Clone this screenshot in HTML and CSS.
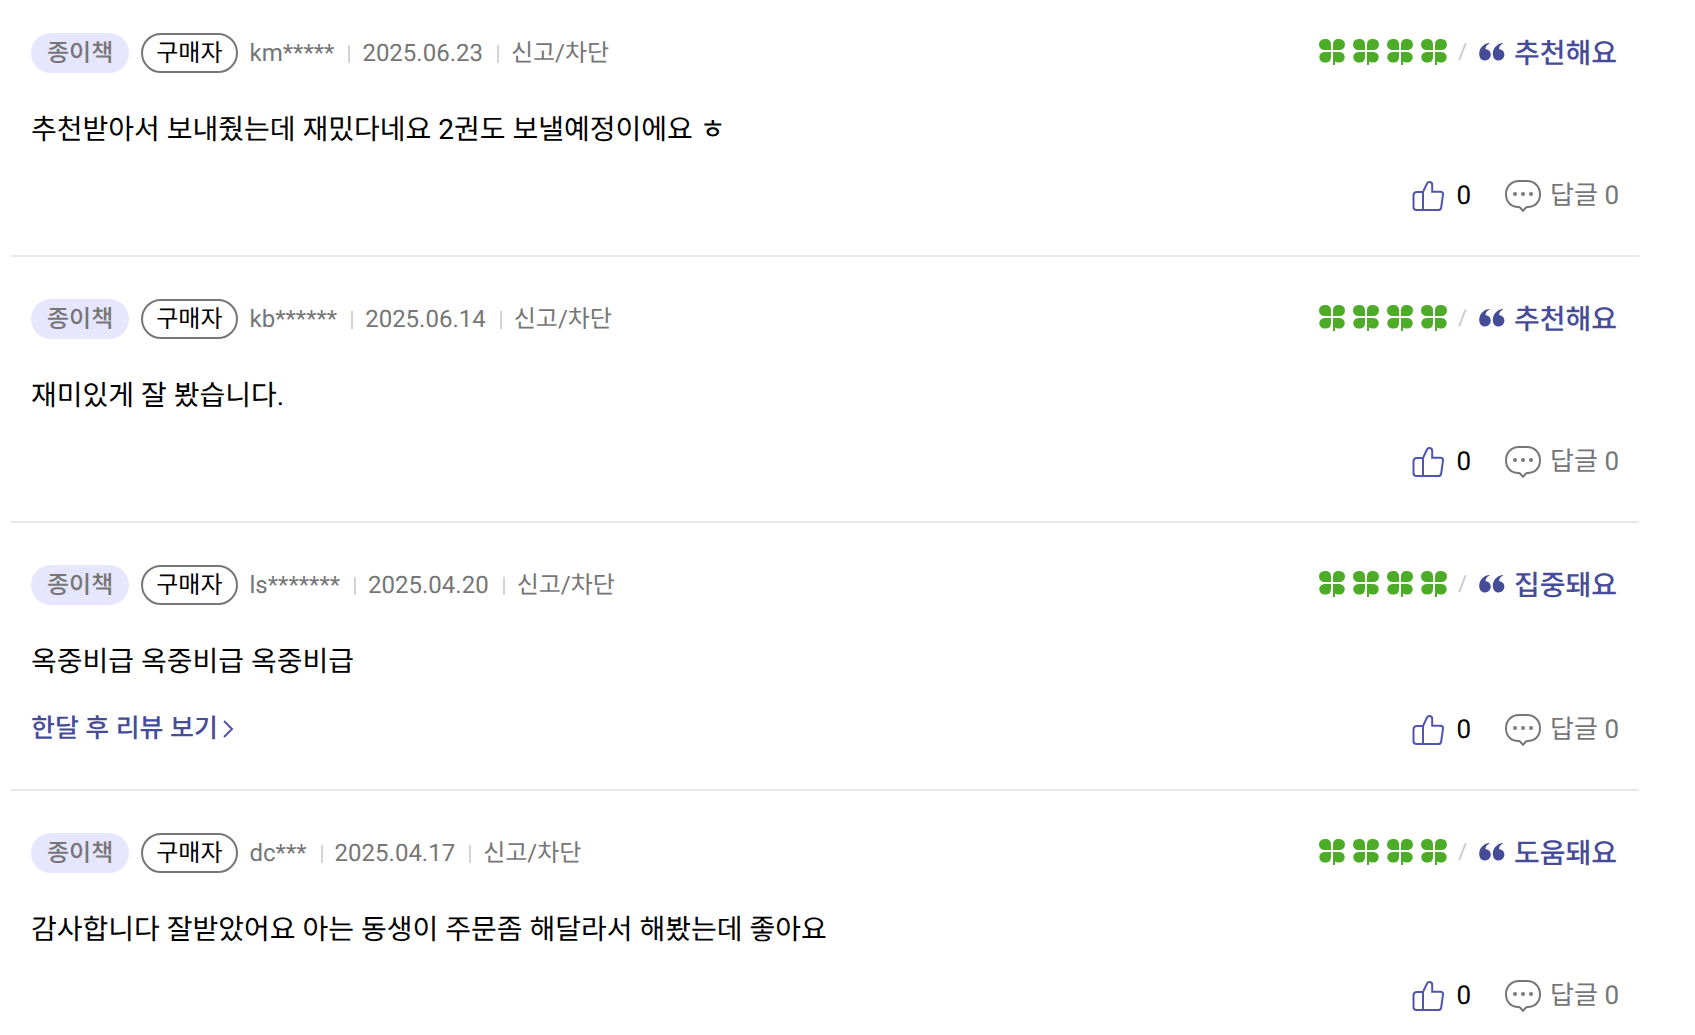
FILE: index.html
```
<!DOCTYPE html>
<html lang="ko">
<head>
<meta charset="utf-8">
<meta name="viewport" content="width=device-width, initial-scale=1">
<title>리뷰</title>
<link rel="stylesheet" href="styles.css">
</head>
<body>
<svg class="sprite" aria-hidden="true">
  <symbol id="clover" viewBox="0 0 26 26">
    <path d="M12 11H5.500A5.500 5.500 0 0 1 5.500 0H6.500Q12 0 12 5.500zM14 11V5.500Q14 0 19.500 0H20.500A5.500 5.500 0 0 1 20.500 11zM12 13V18Q12 23.500 6.500 23.500H5.500A5.250 5.250 0 0 1 5.500 13zM14 13H20.500A5.250 5.250 0 0 1 20.500 23.500H19.500Q17.500 23.500 16 22.500V26H14z"/>
  </symbol>
  <symbol id="quote" viewBox="0 0 26 18">
    <path id="mark" d="M10.500 0.500C7.500 2 6.500 4 6.500 6.200C9.500 6.200 11.800 8.500 11.800 11.600C11.800 15 9.300 17.500 6 17.500C2.500 17.500 0.200 14.800 0.200 11C0.200 5.500 4 0.800 9.800 0Q10.800 0 10.500 0.500z"/>
    <use href="#mark" x="13.600"/>
  </symbol>
  <symbol id="thumb" viewBox="0 0 32 32">
    <path d="M11 12 15 3.500C15.500 2.300 16.300 2 17.300 2C19 2 20.200 3.200 20.200 4.800V11.800H28.500Q31.200 11.800 31 14.500L29.200 27.500Q28.800 30 26.500 30H4.500Q1.500 30 1.500 27V15.500Q1.500 12 5 12H11V30"/>
  </symbol>
  <symbol id="bubble" viewBox="0 -1 36 34">
    <path d="M14 1H22C29.500 1 35 6.500 35 14.200C35 22 30 27 22.500 27Q21.300 27 20.500 28L18 30.800 15.500 28Q14.700 27 13.500 27C6 27 1 22 1 14.200C1 6.500 6.500 1 14 1z"/>
    <g class="dots"><circle cx="10" cy="14" r="2"/><circle cx="18" cy="14" r="2"/><circle cx="26" cy="14" r="2"/></g>
  </symbol>
</svg>
<main class="reviews">
  <article class="review">
    <header class="review-head">
      <div class="meta">
        <span class="badge badge-type">종이책</span><span class="badge badge-buyer">구매자</span>
        <span class="info"><span>km*****</span><time datetime="2025-06-23">2025.06.23</time><button type="button">신고/차단</button></span>
      </div>
      <div class="rating">
        <span class="clovers" role="img" aria-label="4점 만점에 4점"><svg><use href="#clover"/></svg><svg><use href="#clover"/></svg><svg><use href="#clover"/></svg><svg><use href="#clover"/></svg></span>
        <span class="slash">/</span><svg class="quote"><use href="#quote"/></svg><span class="tag">추천해요</span>
      </div>
    </header>
    <p class="text">추천받아서 보내줬는데 재밌다네요 2권도 보낼예정이에요 ㅎ</p>
    <footer class="review-foot">
      <div class="actions">
        <button type="button" class="like" aria-label="좋아요 0"><svg><use href="#thumb"/></svg><span>0</span></button>
        <button type="button" class="reply"><svg><use href="#bubble"/></svg><span>답글 0</span></button>
      </div>
    </footer>
  </article>
  <article class="review">
    <header class="review-head">
      <div class="meta">
        <span class="badge badge-type">종이책</span><span class="badge badge-buyer">구매자</span>
        <span class="info"><span>kb******</span><time datetime="2025-06-14">2025.06.14</time><button type="button">신고/차단</button></span>
      </div>
      <div class="rating">
        <span class="clovers" role="img" aria-label="4점 만점에 4점"><svg><use href="#clover"/></svg><svg><use href="#clover"/></svg><svg><use href="#clover"/></svg><svg><use href="#clover"/></svg></span>
        <span class="slash">/</span><svg class="quote"><use href="#quote"/></svg><span class="tag">추천해요</span>
      </div>
    </header>
    <p class="text">재미있게 잘 봤습니다.</p>
    <footer class="review-foot">
      <div class="actions">
        <button type="button" class="like" aria-label="좋아요 0"><svg><use href="#thumb"/></svg><span>0</span></button>
        <button type="button" class="reply"><svg><use href="#bubble"/></svg><span>답글 0</span></button>
      </div>
    </footer>
  </article>
  <article class="review">
    <header class="review-head">
      <div class="meta">
        <span class="badge badge-type">종이책</span><span class="badge badge-buyer">구매자</span>
        <span class="info"><span>ls*******</span><time datetime="2025-04-20">2025.04.20</time><button type="button">신고/차단</button></span>
      </div>
      <div class="rating">
        <span class="clovers" role="img" aria-label="4점 만점에 4점"><svg><use href="#clover"/></svg><svg><use href="#clover"/></svg><svg><use href="#clover"/></svg><svg><use href="#clover"/></svg></span>
        <span class="slash">/</span><svg class="quote"><use href="#quote"/></svg><span class="tag">집중돼요</span>
      </div>
    </header>
    <p class="text">옥중비급 옥중비급 옥중비급</p>
    <footer class="review-foot">
      <a class="later" href="#later">한달 후 리뷰 보기<svg viewBox="0 0 12 20"><path d="M2 2 10 10 2 18"/></svg></a>
      <div class="actions">
        <button type="button" class="like" aria-label="좋아요 0"><svg><use href="#thumb"/></svg><span>0</span></button>
        <button type="button" class="reply"><svg><use href="#bubble"/></svg><span>답글 0</span></button>
      </div>
    </footer>
  </article>
  <article class="review">
    <header class="review-head">
      <div class="meta">
        <span class="badge badge-type">종이책</span><span class="badge badge-buyer">구매자</span>
        <span class="info"><span>dc***</span><time datetime="2025-04-17">2025.04.17</time><button type="button">신고/차단</button></span>
      </div>
      <div class="rating">
        <span class="clovers" role="img" aria-label="4점 만점에 4점"><svg><use href="#clover"/></svg><svg><use href="#clover"/></svg><svg><use href="#clover"/></svg><svg><use href="#clover"/></svg></span>
        <span class="slash">/</span><svg class="quote"><use href="#quote"/></svg><span class="tag">도움돼요</span>
      </div>
    </header>
    <p class="text">감사합니다 잘받았어요 아는 동생이 주문좀 해달라서 해봤는데 좋아요</p>
    <footer class="review-foot">
      <div class="actions">
        <button type="button" class="like" aria-label="좋아요 0"><svg><use href="#thumb"/></svg><span>0</span></button>
        <button type="button" class="reply"><svg><use href="#bubble"/></svg><span>답글 0</span></button>
      </div>
    </footer>
  </article>
</main>
</body>
</html>
```
FILE: styles.css
```
* { box-sizing: border-box; }
body {
  margin: 0;
  background: #fff;
  color: #000;
  font-family: Roboto, "Noto Sans CJK KR", sans-serif;
  text-rendering: geometricPrecision;
}
button {
  margin: 0;
  padding: 0;
  border: 0;
  background: none;
  color: inherit;
  font: inherit;
  text-rendering: inherit;
  cursor: pointer;
}
svg { display: block; flex: none; }
.sprite { position: absolute; width: 0; height: 0; }

.reviews { margin: 0 56px 0 11px; }
.review {
  padding: 42px 20px 40px;
  border-bottom: 2px solid #e8e8e8;
}
.review:first-child { padding-top: 33px; }
.review:last-child { border-bottom: 0; padding-bottom: 20px; }

.review-head {
  display: flex;
  justify-content: space-between;
  height: 40px;
}
.meta, .rating, .info, .clovers, .actions, .like, .reply, .later {
  display: flex;
  align-items: center;
}
.meta { gap: 12px; }
.badge {
  height: 40px;
  padding: 0 16px;
  border-radius: 20px;
  font-size: 24px;
  line-height: 40px;
}
.badge-type { background: #e6e6fe; color: #767676; font-weight: 500; }
.badge-buyer {
  padding: 0 13px;
  border: 2px solid #767676;
  line-height: 36px;
}
.info {
  color: #767676;
  font-size: 24px;
  line-height: 36px;
}
.info > * + * { display: flex; align-items: center; }
.info > * + *::before {
  content: "";
  width: 2px;
  height: 18px;
  margin: 2px 12px 0 14px;
  background: #d4d4d4;
}

.rating { height: 38px; padding-right: 2px; }
.clovers { gap: 8px; fill: #4dac27; }
.clovers svg { width: 26px; height: 26px; }
.slash {
  margin: 0 12px 0 11px;
  color: #c8c8c8;
  font-size: 22px;
}
.quote { width: 26px; height: 18px; fill: #474c98; }
.tag {
  margin-left: 9px;
  color: #474c98;
  font-family: "Noto Sans CJK KR", sans-serif;
  font-size: 28px;
  font-weight: 500;
  line-height: 36px;
}

.text {
  margin: 36px 0 26px;
  font-size: 28px;
  line-height: 42px;
}

.review-foot {
  display: flex;
  align-items: flex-end;
  font-size: 26px;
}
.later {
  gap: 4px;
  color: #474c98;
  font-weight: 500;
  line-height: 40px;
  text-decoration: none;
}
.later svg { width: 12px; height: 20px; fill: none; stroke: #5055b1; stroke-width: 2; }
.actions { gap: 34px; height: 38px; margin-left: auto; line-height: 36px; }
.like { gap: 12px; }
.like svg { width: 32px; height: 32px; fill: none; stroke: #5055b1; stroke-width: 2; }
.reply { gap: 9px; color: #767676; }
.reply svg { width: 36px; height: 34px; fill: none; stroke: #767676; stroke-width: 2; }
.dots { fill: #767676; stroke: none; }
```
